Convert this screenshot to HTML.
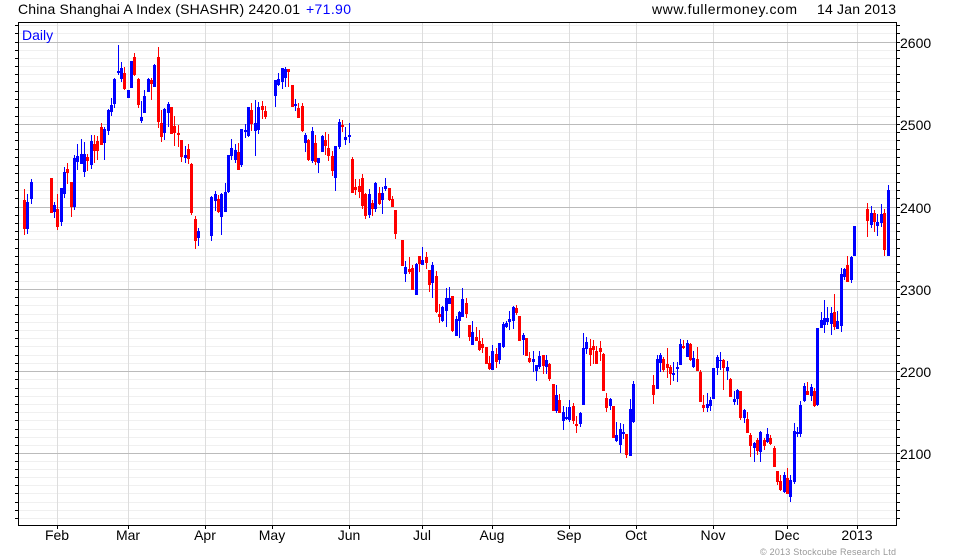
<!DOCTYPE html>
<html><head><meta charset="utf-8"><style>
html,body{margin:0;padding:0;background:#fff;width:980px;height:560px;overflow:hidden}
svg{display:block;position:absolute;left:0;top:0}
text{font-family:"Liberation Sans",Arial,sans-serif;font-size:14px;fill:#000}
</style></head><body>
<svg width="980" height="560" viewBox="0 0 980 560" shape-rendering="crispEdges">
<path transform="translate(0,.5)" stroke="#f0f0f0" fill="none" d="M19 25H896M19 33H896M19 50H896M19 58H896M19 66H896M19 74H896M19 82H896M19 91H896M19 99H896M19 107H896M19 116H896M19 132H896M19 140H896M19 149H896M19 157H896M19 165H896M19 173H896M19 182H896M19 190H896M19 198H896M19 215H896M19 223H896M19 231H896M19 239H896M19 248H896M19 256H896M19 264H896M19 272H896M19 281H896M19 297H896M19 305H896M19 314H896M19 322H896M19 330H896M19 338H896M19 346H896M19 355H896M19 363H896M19 379H896M19 388H896M19 396H896M19 404H896M19 412H896M19 420H896M19 429H896M19 437H896M19 445H896M19 461H896M19 469H896M19 477H896M19 485H896M19 493H896M19 502H896M19 510H896M19 518H896"/>
<path transform="translate(.5,0)" stroke="#ddd" fill="none" d="M57 23V525M128 23V525M205 23V525M272 23V525M349 23V525M422 23V525M492 23V525M569 23V525M636 23V525M713 23V525M787 23V525M857 23V525"/>
<path transform="translate(0,.5)" stroke="#bbb" fill="none" d="M19 42H896M19 124H896M19 207H896M19 289H896M19 371H896M19 453H896"/>
<g transform="translate(.5,0)" fill="none">
<path stroke="#f00" d="M24 189V235M51 178V213M57 194V230M67 163V184M71 182V217M87 154V171M94 135V163M97 136V160M101 123V145M124 67V90M134 53V76M138 78V108M151 78V100M158 47V128M161 110V142M171 107V134M174 116V146M178 125V147M181 140V162M188 144V164M191 163V215M195 216V249M218 195V213M238 143V170M251 103V131M262 101V119M265 106V119M288 69V87M292 85V107M298 103V118M302 103V132M308 139V161M315 135V165M325 132V155M328 134V161M332 151V176M342 120V132M352 157V193M355 179V195M359 179V198M362 174V209M365 193V219M372 200V216M379 187V205M389 188V201M392 196V207M395 210V239M402 240V266M409 257V274M412 265V290M419 256V272M426 252V269M429 270V292M436 271V313M439 304V323M452 296V332M466 298V318M469 325V341M476 327V341M479 330V351M482 338V353M486 347V364M489 356V370M496 348V368M516 305V315M519 316V341M526 338V356M529 352V363M543 355V374M549 363V381M553 384V411M559 394V413M573 403V424M576 416V433M590 339V366M593 340V364M596 346V364M600 341V361M603 353V391M606 393V412M613 406V438M626 434V458M653 375V404M663 357V372M667 348V378M670 365V385M683 340V349M690 343V361M697 347V371M700 370V402M703 395V412M723 359V390M730 378V397M740 391V420M747 412V433M750 433V457M757 438V455M764 438V450M770 435V445M774 446V467M777 471V485M780 475V491M787 468V494M807 382V395M814 388V407M834 294V330M847 256V282M867 203V237M874 210V232M884 209V256"/>
<path stroke="#f00" stroke-width="3" d="M24 200V229M51 178V213M57 209V227M67 169V173M71 182V207M87 157V161M94 144V151M97 141V151M101 127V145M124 73V89M134 57V75M138 79V105M151 80V84M158 57V122M161 123V137M171 107V134M174 126V133M178 133V135M181 140V157M188 149V159M191 164V213M195 219V241M218 199V212M238 152V170M251 110V124M262 106V110M265 111V117M288 69V72M292 85V107M298 108V118M302 106V131M308 140V160M315 143V162M325 140V146M328 148V156M332 156V171M342 125V127M352 159V193M355 187V190M359 186V192M362 178V206M365 194V216M372 203V209M379 193V204M389 188V200M392 199V207M395 210V234M402 240V266M409 269V272M412 268V290M419 256V264M426 257V263M429 270V285M436 276V312M439 314V317M452 296V331M466 303V314M469 325V337M476 337V341M479 341V350M482 344V348M486 347V364M489 363V369M496 354V362M516 308V313M519 316V341M526 338V356M529 358V362M543 355V366M549 364V379M553 384V411M559 400V413M573 406V421M576 424V426M590 348V355M593 346V350M596 351V364M600 348V352M603 354V391M606 398V408M613 406V438M626 434V455M653 385V395M663 359V370M667 364V368M670 367V374M683 346V348M690 344V360M697 359V371M700 372V402M703 405V408M723 360V368M730 379V397M740 391V418M747 419V433M750 435V446M757 440V451M764 440V446M770 438V444M774 448V467M777 471V482M780 481V490M787 478V494M807 391V395M814 391V406M834 312V327M847 265V282M867 209V221M874 213V222M884 213V250"/>
<path stroke="#00f" d="M27 194V234M31 179V204M54 202V218M61 188V226M64 167V198M74 155V210M77 144V170M81 139V164M84 142V177M91 135V169M104 127V160M108 109V135M111 98V116M114 78V108M118 45V75M121 62V82M128 90V98M131 61V88M141 101V123M144 90V113M148 78V92M154 64V87M164 108V140M168 102V127M185 146V163M198 228V246M211 196V241M215 191V211M221 193V235M225 183V212M228 155V193M231 139V160M235 144V163M241 129V167M245 124V138M248 107V137M255 100V156M258 102V134M275 80V107M278 73V86M282 68V89M285 67V87M295 99V111M305 133V152M312 127V163M318 158V173M322 135V152M335 146V191M339 119V149M345 127V145M349 123V143M369 189V218M375 182V212M382 187V214M385 178V191M405 261V282M416 263V295M422 247V265M432 262V298M442 306V322M446 288V327M449 287V304M456 316V336M459 311V338M462 288V317M472 321V345M492 345V370M499 343V364M503 322V348M506 321V328M509 311V330M513 306V329M523 333V355M533 351V372M536 365V381M539 351V369M546 355V374M556 385V413M563 406V430M566 407V420M569 400V422M580 412V427M583 333V405M586 337V354M610 398V410M616 422V442M620 423V453M623 424V439M630 399V456M633 381V423M657 355V389M660 353V372M673 362V381M677 362V382M680 339V365M687 340V357M693 351V368M707 393V412M710 397V411M713 368V399M717 355V375M720 352V370M727 361V380M734 391V405M737 389V405M744 409V423M754 442V462M760 431V462M767 428V443M784 472V493M790 475V502M794 423V484M797 427V437M800 401V437M804 383V402M811 384V401M817 328V406M821 312V328M824 300V333M827 307V325M831 307V335M837 311V329M841 268V332M844 268V280M851 256V283M854 226V256M871 206V228M877 214V236M881 204V227M888 185V256"/>
<path stroke="#00f" stroke-width="3" d="M27 202V229M31 182V199M54 205V212M61 188V222M64 172V194M74 158V207M77 156V162M81 154V164M84 154V172M91 141V165M104 129V143M108 110V131M111 105V112M114 79V104M118 71V73M121 68V79M128 90V98M131 61V88M141 117V121M144 96V113M148 79V92M154 65V87M164 109V133M168 104V113M185 155V158M198 231V238M211 197V236M215 194V201M221 194V217M225 192V212M228 155V192M231 148V156M235 150V160M241 129V165M245 130V132M248 107V136M255 123V131M258 107V130M275 80V96M278 79V85M282 68V82M285 69V78M295 104V106M305 135V143M312 131V161M318 158V163M322 136V152M335 146V178M339 122V147M345 137V140M349 135V137M369 194V215M375 183V209M382 193V200M385 186V189M405 267V274M416 264V295M422 260V265M432 265V283M442 307V321M446 298V311M449 298V304M456 319V336M459 312V321M462 299V317M472 332V345M492 351V370M499 343V360M503 324V347M506 323V327M509 319V322M513 307V321M523 335V340M533 359V362M536 365V371M539 356V367M546 360V367M556 395V411M563 412V421M566 417V419M569 407V420M580 413V424M583 348V405M586 342V349M610 399V406M616 435V441M620 429V445M623 432V434M630 409V456M633 384V422M657 359V389M660 355V363M673 373V375M677 367V369M680 344V365M687 343V357M693 358V367M707 404V408M710 400V406M713 368V399M717 357V368M720 360V361M727 367V371M734 399V402M737 390V399M744 410V418M754 443V448M760 432V452M767 434V442M784 475V492M790 480V497M794 431V482M797 432V434M800 405V434M804 386V401M811 387V396M817 328V405M821 320V328M824 318V325M827 318V322M831 313V324M837 321V329M841 274V326M844 269V277M851 257V280M854 226V256M871 213V225M877 222V226M881 214V223M888 190V256"/>
</g>
<path fill="none" stroke="#000" d="M18.5 22.5H896.5V525.5H18.5Z"/>
<path transform="translate(0,.5)" fill="none" stroke="#000" d="M15 25H18M15 33H18M15 42H18M15 50H18M15 58H18M15 66H18M15 74H18M15 82H18M15 91H18M15 99H18M15 107H18M15 116H18M15 124H18M15 132H18M15 140H18M15 149H18M15 157H18M15 165H18M15 173H18M15 182H18M15 190H18M15 198H18M15 207H18M15 215H18M15 223H18M15 231H18M15 239H18M15 248H18M15 256H18M15 264H18M15 272H18M15 281H18M15 289H18M15 297H18M15 305H18M15 314H18M15 322H18M15 330H18M15 338H18M15 346H18M15 355H18M15 363H18M15 371H18M15 379H18M15 388H18M15 396H18M15 404H18M15 412H18M15 420H18M15 429H18M15 437H18M15 445H18M15 453H18M15 461H18M15 469H18M15 477H18M15 485H18M15 493H18M15 502H18M15 510H18M15 518H18M897 25H900M897 33H900M897 42H900M897 50H900M897 58H900M897 66H900M897 74H900M897 82H900M897 91H900M897 99H900M897 107H900M897 116H900M897 124H900M897 132H900M897 140H900M897 149H900M897 157H900M897 165H900M897 173H900M897 182H900M897 190H900M897 198H900M897 207H900M897 215H900M897 223H900M897 231H900M897 239H900M897 248H900M897 256H900M897 264H900M897 272H900M897 281H900M897 289H900M897 297H900M897 305H900M897 314H900M897 322H900M897 330H900M897 338H900M897 346H900M897 355H900M897 363H900M897 371H900M897 379H900M897 388H900M897 396H900M897 404H900M897 412H900M897 420H900M897 429H900M897 437H900M897 445H900M897 453H900M897 461H900M897 469H900M897 477H900M897 485H900M897 493H900M897 502H900M897 510H900M897 518H900"/>
<path transform="translate(.5,0)" fill="none" stroke="#000" d="M57 526V529M128 526V529M205 526V529M272 526V529M349 526V529M422 526V529M492 526V529M569 526V529M636 526V529M713 526V529M787 526V529M857 526V529"/>
<g shape-rendering="auto">
<text x="18" y="14" textLength="282" lengthAdjust="spacing">China Shanghai A Index (SHASHR) 2420.01</text>
<text x="306" y="14" textLength="45" lengthAdjust="spacing" style="fill:#00f">+71.90</text>
<text x="652" y="14" textLength="145" lengthAdjust="spacing">www.fullermoney.com</text>
<text x="817" y="14" textLength="79" lengthAdjust="spacing">14 Jan 2013</text>
<text x="22" y="40" style="fill:#00f">Daily</text>
<text x="900" y="48">2600</text>
<text x="900" y="130">2500</text>
<text x="900" y="213">2400</text>
<text x="900" y="295">2300</text>
<text x="900" y="377">2200</text>
<text x="900" y="459">2100</text>
<g text-anchor="middle">
<text x="57" y="540">Feb</text>
<text x="128" y="540">Mar</text>
<text x="205" y="540">Apr</text>
<text x="272" y="540">May</text>
<text x="349" y="540">Jun</text>
<text x="422" y="540">Jul</text>
<text x="492" y="540">Aug</text>
<text x="569" y="540">Sep</text>
<text x="636" y="540">Oct</text>
<text x="713" y="540">Nov</text>
<text x="787" y="540">Dec</text>
<text x="857" y="540">2013</text>
</g>
<text x="760" y="555" textLength="136" lengthAdjust="spacing" style="font-size:9px;fill:#999">© 2013 Stockcube Research Ltd</text>
</g>
</svg>
</body></html>
